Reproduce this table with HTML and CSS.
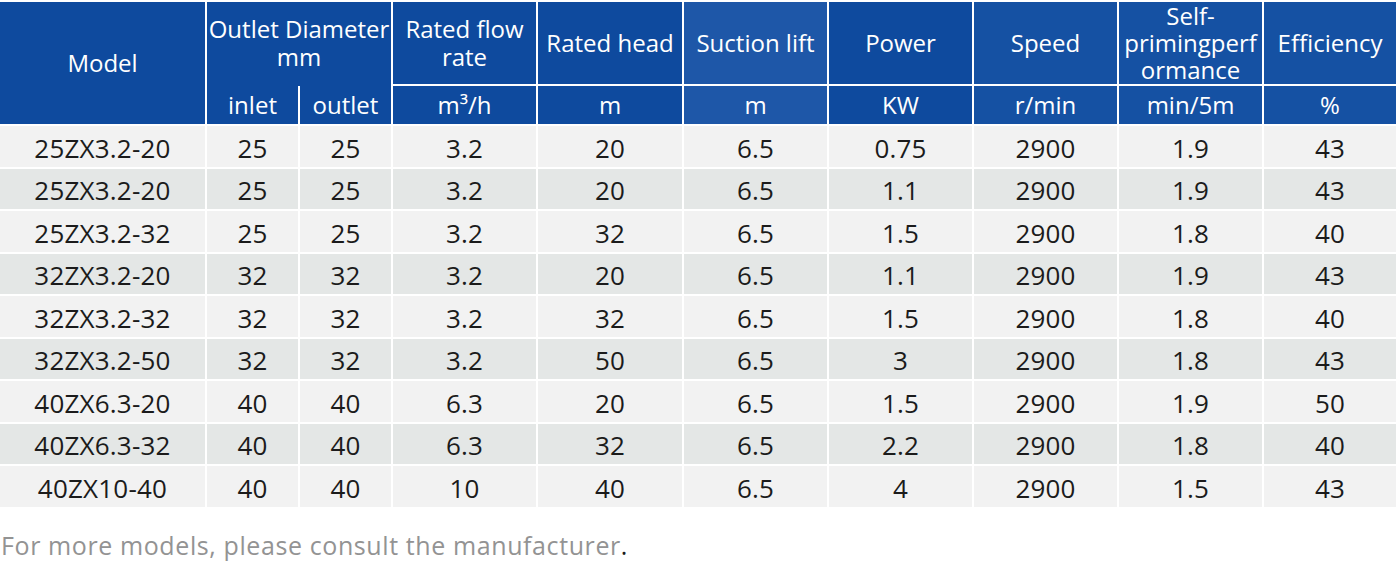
FILE: index.html
```html
<!DOCTYPE html>
<html lang="en">
<head>
<meta charset="utf-8">
<title>ZX pump parameters</title>
<link rel="stylesheet" href="styles.css">
</head>
<body>
<table class="spec">
  <colgroup>
    <col class="c-model"><col class="c-half"><col class="c-half"><col class="c-std"><col class="c-head"><col class="c-std"><col class="c-std"><col class="c-std"><col class="c-std"><col class="c-eff">
  </colgroup>
  <thead>
    <tr class="h1">
      <th rowspan="2">Model</th>
      <th colspan="2" class="merge">Outlet Diameter<br>mm</th>
      <th>Rated flow<br>rate</th>
      <th>Rated head</th>
      <th class="lighter">Suction lift</th>
      <th>Power</th>
      <th class="light">Speed</th>
      <th class="light tight">Self-<br>primingperf<br>ormance</th>
      <th class="light">Efficiency</th>
    </tr>
    <tr class="h2">
      <th>inlet</th>
      <th>outlet</th>
      <th>m³/h</th>
      <th>m</th>
      <th class="lighter">m</th>
      <th>KW</th>
      <th class="light">r/min</th>
      <th class="light">min/5m</th>
      <th class="light">%</th>
    </tr>
  </thead>
  <tbody>
    <tr><td>25ZX3.2-20</td><td>25</td><td>25</td><td>3.2</td><td>20</td><td>6.5</td><td>0.75</td><td>2900</td><td>1.9</td><td>43</td></tr>
    <tr><td>25ZX3.2-20</td><td>25</td><td>25</td><td>3.2</td><td>20</td><td>6.5</td><td>1.1</td><td>2900</td><td>1.9</td><td>43</td></tr>
    <tr><td>25ZX3.2-32</td><td>25</td><td>25</td><td>3.2</td><td>32</td><td>6.5</td><td>1.5</td><td>2900</td><td>1.8</td><td>40</td></tr>
    <tr><td>32ZX3.2-20</td><td>32</td><td>32</td><td>3.2</td><td>20</td><td>6.5</td><td>1.1</td><td>2900</td><td>1.9</td><td>43</td></tr>
    <tr><td>32ZX3.2-32</td><td>32</td><td>32</td><td>3.2</td><td>32</td><td>6.5</td><td>1.5</td><td>2900</td><td>1.8</td><td>40</td></tr>
    <tr><td>32ZX3.2-50</td><td>32</td><td>32</td><td>3.2</td><td>50</td><td>6.5</td><td>3</td><td>2900</td><td>1.8</td><td>43</td></tr>
    <tr><td>40ZX6.3-20</td><td>40</td><td>40</td><td>6.3</td><td>20</td><td>6.5</td><td>1.5</td><td>2900</td><td>1.9</td><td>50</td></tr>
    <tr><td>40ZX6.3-32</td><td>40</td><td>40</td><td>6.3</td><td>32</td><td>6.5</td><td>2.2</td><td>2900</td><td>1.8</td><td>40</td></tr>
    <tr><td>40ZX10-40</td><td>40</td><td>40</td><td>10</td><td>40</td><td>6.5</td><td>4</td><td>2900</td><td>1.5</td><td>43</td></tr>
  </tbody>
</table>
<p class="note">For more models, please consult the manufacturer<span class="dot">.</span></p>
</body>
</html>
```

FILE: styles.css
```css
html, body {
  margin: 0;
  padding: 0;
  background: #ffffff;
}

body {
  font-family: "Open Sans", "Noto Sans", "Liberation Sans", sans-serif;
  width: 1400px;
  overflow: hidden;
}

.spec {
  width: 1400px;
  margin-left: -2px;
  border-collapse: separate;
  border-spacing: 2px;
  table-layout: fixed;
  font-size: 24px;
}

.c-model { width: 205px; }
.c-half { width: 91px; }
.c-std { width: 143px; }
.c-head { width: 144px; }
.c-eff { width: 132px; }

.spec th {
  background: #0e4a9e;
  color: #ffffff;
  font-weight: 400;
  padding: 0;
  text-align: center;
  vertical-align: middle;
  line-height: 28px;
  white-space: nowrap;
}

.spec th.lighter { background: #1e57a8; }
.spec th.light { background: #1551a3; }

.spec th.merge { position: relative; }
.spec th.merge::after {
  content: "";
  position: absolute;
  left: 0;
  right: 0;
  bottom: -2px;
  height: 2px;
  background: #0e4a9e;
}

.spec th.tight {
  line-height: 27px;
  vertical-align: top;
  padding-top: 0;
}

.h1 th { height: 82px; }
.h2 th { height: 38px; }

.spec td {
  height: 40.5px;
  padding: 3px 0 0;
  box-sizing: border-box;
  text-align: center;
  vertical-align: middle;
  color: #1b1b1b;
  font-size: 26px;
  letter-spacing: 0.2px;
  line-height: 30px;
  white-space: nowrap;
}

.spec tbody tr:nth-child(odd) td { background: #f2f2f2; }
.spec tbody tr:nth-child(even) td { background: #e4e7e6; }

.note {
  margin: 20px 0 0 1px;
  font-size: 25px;
  letter-spacing: 0.6px;
  line-height: 32px;
  color: #939393;
}

.note .dot { color: #1b1b1b; }
```
